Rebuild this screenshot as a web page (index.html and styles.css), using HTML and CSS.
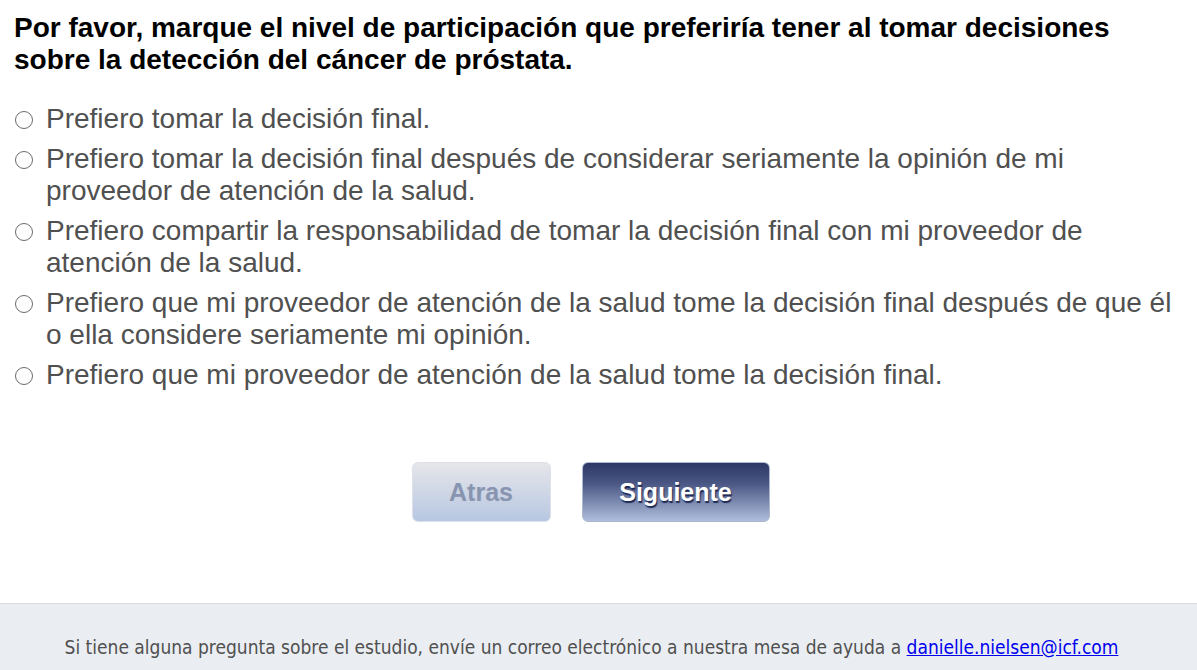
FILE: index.html
```html
<!DOCTYPE html>
<html lang="es">
<head>
    <meta charset="UTF-8">
    <meta name="viewport" content="width=device-width, initial-scale=1.0">
    <title>Encuesta</title>
    <link rel="stylesheet" href="styles.css">
</head>
<body>
    <div class="page">
        <div class="question">
            <h2>Por favor, marque el nivel de participación que preferiría tener al tomar decisiones sobre la detección del cáncer de próstata.</h2>
            <ul class="options">
                <li class="option"><span class="radio"></span><span class="label">Prefiero tomar la decisión final.</span></li>
                <li class="option"><span class="radio"></span><span class="label">Prefiero tomar la decisión final después de considerar seriamente la opinión de mi proveedor de atención de la salud.</span></li>
                <li class="option"><span class="radio"></span><span class="label">Prefiero compartir la responsabilidad de tomar la decisión final con mi proveedor de atención de la salud.</span></li>
                <li class="option"><span class="radio"></span><span class="label">Prefiero que mi proveedor de atención de la salud tome la decisión final después de que él o ella considere seriamente mi opinión.</span></li>
                <li class="option"><span class="radio"></span><span class="label">Prefiero que mi proveedor de atención de la salud tome la decisión final.</span></li>
            </ul>
        </div>

        <div class="nav">
            <button type="button" class="btn btn-back" disabled>Atras</button>
            <button type="button" class="btn btn-next">Siguiente</button>
        </div>
    </div>

    <footer class="footer">
        <p>Si tiene alguna pregunta sobre el estudio, envíe un correo electrónico a nuestra mesa de ayuda a <a href="#">danielle.nielsen@icf.com</a></p>
    </footer>
</body>
</html>
```

FILE: styles.css
```css
* {
    margin: 0;
    padding: 0;
    box-sizing: border-box;
}

body {
    font-family: "Liberation Sans", Arial, sans-serif;
    background: #fff;
    min-height: 100vh;
    display: flex;
    flex-direction: column;
}

.page {
    flex: 1;
    padding: 12px 14px 0;
}

h2 {
    font-size: 28px;
    font-weight: 700;
    line-height: 32px;
    color: #000;
}

.options {
    list-style: none;
    margin-top: 27px;
}

.option {
    display: flex;
    align-items: flex-start;
    margin-bottom: 8px;
    font-size: 28px;
    line-height: 32px;
    color: #505050;
}

.radio {
    flex: none;
    width: 18px;
    height: 18px;
    margin: 8px 13px 0 1px;
    border: 1.5px solid #6a6a6a;
    border-radius: 50%;
}

.nav {
    display: flex;
    justify-content: center;
    gap: 31px;
    margin-top: 71px;
    padding-right: 16px;
}

.btn {
    height: 60px;
    border-radius: 6px;
    font-family: "Liberation Sans", Arial, sans-serif;
    font-size: 25px;
    font-weight: 700;
    cursor: pointer;
}

.btn-back {
    width: 139px;
    border: 1px solid #dde2ea;
    background: linear-gradient(#e6e6ea, #b7c7e2);
    color: #8895b0;
    text-shadow: 1px 1px 1px #c8d0e0;
    cursor: default;
}

.btn-next {
    width: 188px;
    border: 1px solid #aeb8cc;
    background: linear-gradient(#2c3766, #4a5683 35%, #afbedd);
    color: #fff;
    text-shadow: 1px 2px 1px #1e2a55;
}

.footer {
    background: #eaeef2;
    border-top: 1px solid #d8dcdf;
    height: 67px;
    padding-top: 32px;
    text-align: center;
}

.footer p {
    font-family: "DejaVu Sans Condensed", Tahoma, sans-serif;
    font-size: 19px;
    color: #505050;
    padding-right: 14px;
}

.footer a {
    color: #0000ee;
}
```
